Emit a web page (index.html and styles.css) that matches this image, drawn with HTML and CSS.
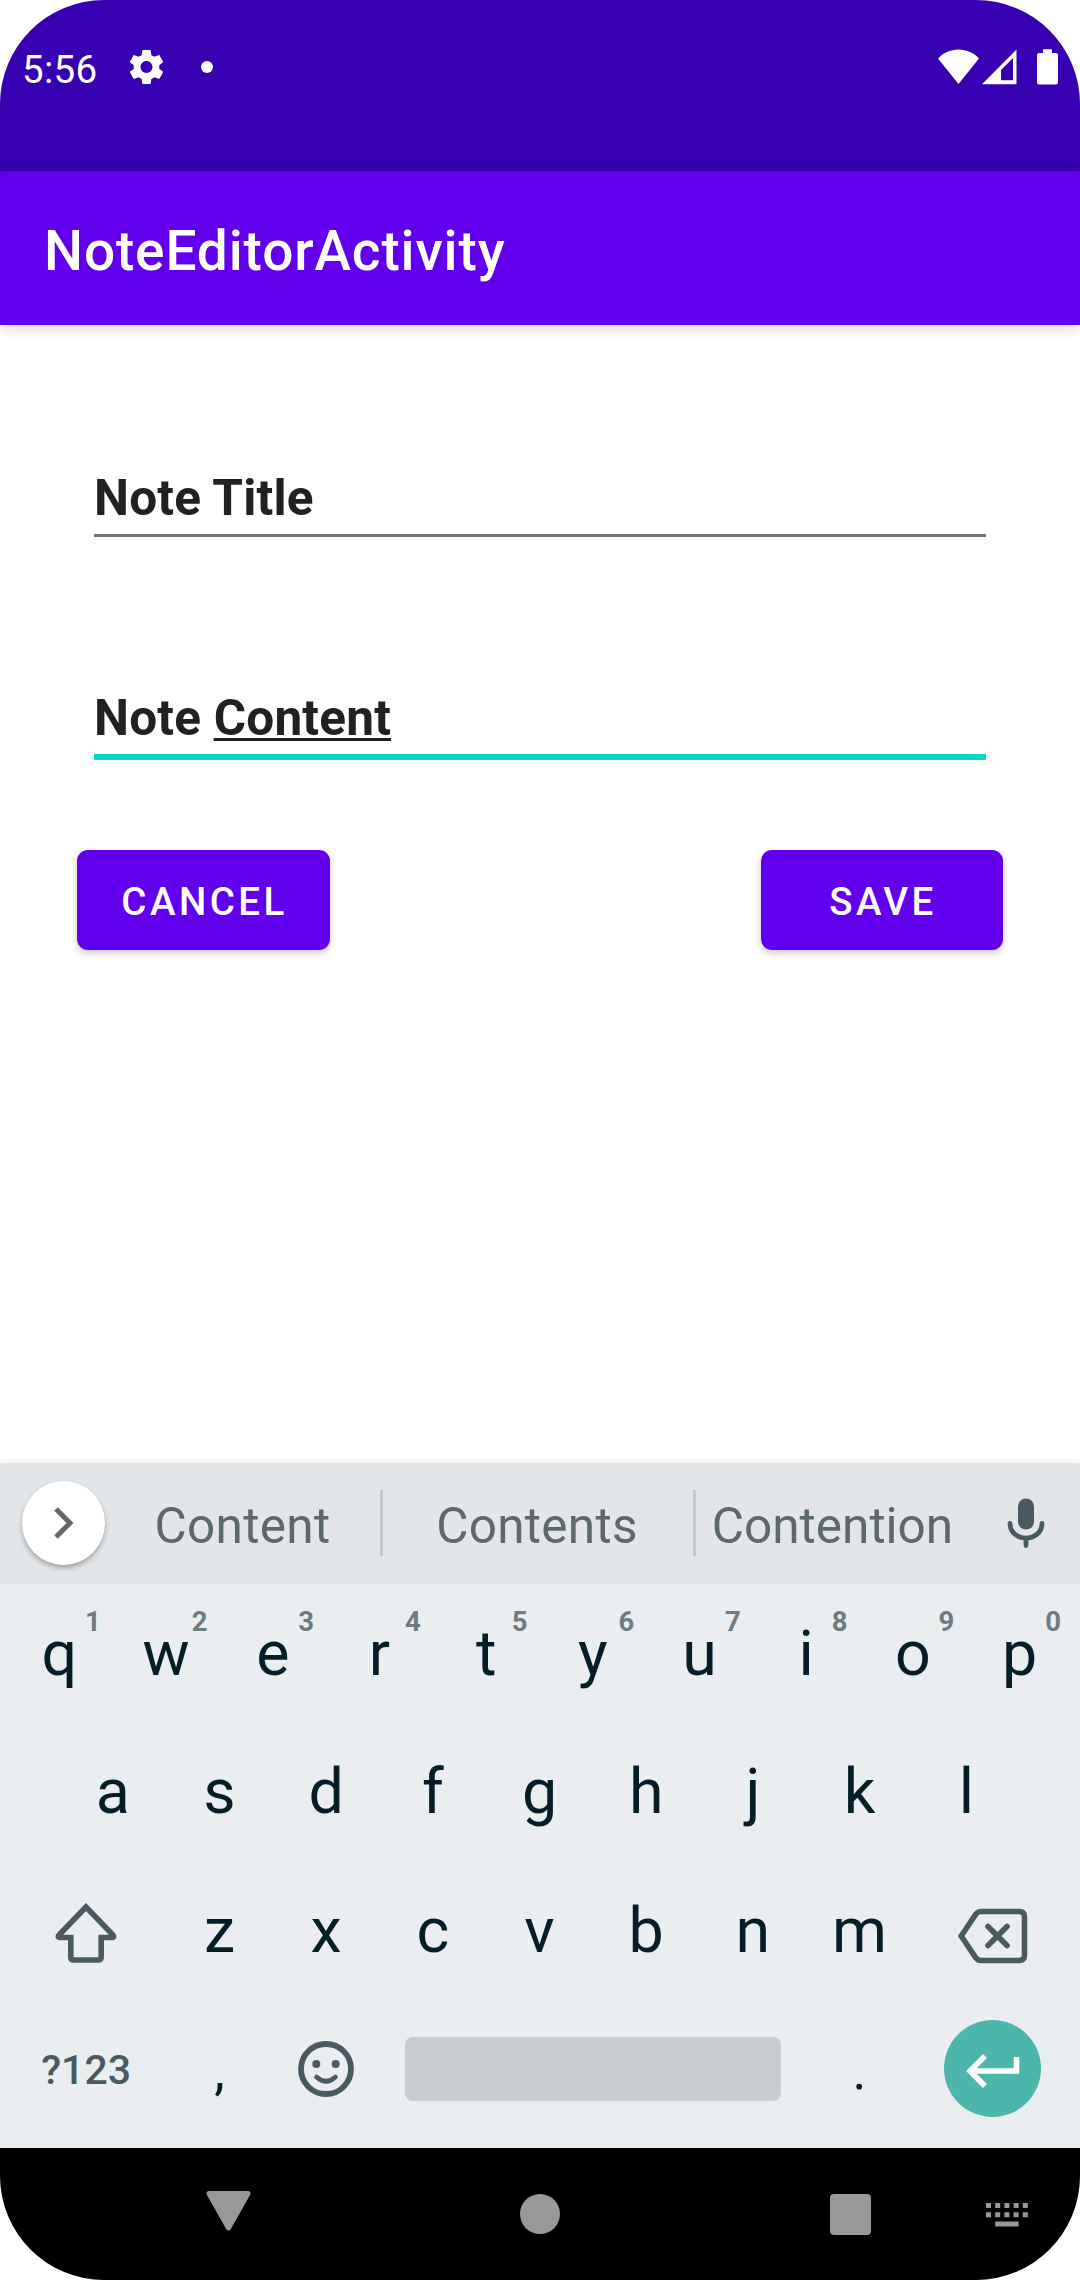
FILE: index.html
```html
<!DOCTYPE html>
<html lang="en">
<head>
<meta charset="utf-8">
<title>NoteEditorActivity</title>
<link rel="stylesheet" href="styles.css">
</head>
<body>
<div class="screen">
  <header class="status-bar">
    <span class="clock">5:56</span>
    <svg class="gear" viewBox="0 0 24 24"><path fill="#fff" fill-rule="evenodd" d="M19.43 12.98c.04-.32.07-.64.07-.98s-.03-.66-.07-.98l2.11-1.65c.19-.15.24-.42.12-.64l-2-3.46c-.12-.22-.39-.3-.61-.22l-2.49 1c-.52-.4-1.08-.73-1.69-.98l-.38-2.65C14.46 2.180 14.250 2 14 2h-4c-.25 0-.46.18-.49.42l-.38 2.650c-.61.25-1.170.59-1.690.98l-2.490-1c-.23-.09-.49 0-.61.22l-2 3.460c-.13.22-.07.49.12.640l2.110 1.650c-.04.32-.07.650-.07.980s.03.660.070.980l-2.110 1.650c-.19.150-.24.420-.12.640l2 3.460c.12.220.390.300.610.220l2.490-1c.52.400 1.080.730 1.690.980l.38 2.650c.03.240.240.420.490.420h4c.25 0 .46-.18.490-.42l.38-2.650c.61-.25 1.170-.59 1.690-.98l2.490 1c.23.090.490 0 .610-.22l2-3.460c.12-.22.070-.49-.12-.64l-2.110-1.650zM12 15.500c-1.930 0-3.500-1.570-3.500-3.500s1.570-3.500 3.500-3.500 3.500 1.570 3.500 3.500-1.570 3.500-3.500 3.500z"/></svg>
    <span class="dot"></span>
    <div class="indicators">
      <svg width="41" height="36" viewBox="0 0 41 36"><path fill="#fff" d="M0 9.500C5 4 12 .5 20.500.5S36 4 41 9.500L20.500 35z"/></svg>
      <svg class="signal" width="35" height="36" viewBox="0 0 35 36"><path fill="#fff" fill-rule="evenodd" d="M0 35.200 34.500.5v34.700zM19 21v10.200h12V9z"/></svg>
      <svg class="battery" width="21" height="36" viewBox="0 0 21 36"><path fill="#fff" d="M6 .3h9V4h4a2 2 0 0 1 2 2v27.500a2 2 0 0 1-2 2H2a2 2 0 0 1-2-2V6a2 2 0 0 1 2-2h4z"/></svg>
    </div>
  </header>

  <div class="app-bar"><h1>NoteEditorActivity</h1></div>

  <main class="editor">
    <div class="field title">Note Title</div>
    <div class="field content">Note <u>Content</u></div>
    <div class="actions">
      <button class="btn">CANCEL</button>
      <button class="btn">SAVE</button>
    </div>
  </main>

  <section class="keyboard">
    <div class="suggestions">
      <span class="expand"><svg width="22" height="34" viewBox="0 0 22 34"><path d="M3 3l14 14L3 31" fill="none" stroke="#666" stroke-width="5"/></svg></span>
      <span class="word first">Content</span>
      <span class="word second">Contents</span>
      <span class="word third">Contention</span>
      <svg class="mic" width="38" height="50" viewBox="0 0 38 50"><rect x="11" y=".5" width="16" height="31" rx="8" fill="#4a5a61"/><path d="M3 25.500C3.500 45 34.500 45 35 25.500M19 40v7.500" fill="none" stroke="#4a5a61" stroke-width="4.800" stroke-linecap="round"/></svg>
    </div>
    <div class="keys">
      <div class="row">
        <span class="key">q<sup>1</sup></span><span class="key">w<sup>2</sup></span><span class="key">e<sup>3</sup></span><span class="key">r<sup>4</sup></span><span class="key">t<sup>5</sup></span><span class="key">y<sup>6</sup></span><span class="key">u<sup>7</sup></span><span class="key">i<sup>8</sup></span><span class="key">o<sup>9</sup></span><span class="key">p<sup>0</sup></span>
      </div>
      <div class="row">
        <span class="key">a</span><span class="key">s</span><span class="key">d</span><span class="key">f</span><span class="key">g</span><span class="key">h</span><span class="key">j</span><span class="key">k</span><span class="key">l</span>
      </div>
      <div class="row">
        <span class="key wide"><svg class="shift" width="62" height="60" viewBox="0 0 62 60"><path d="M31 4 4.500 31.500Q1.500 34.500 6 34.500H15.800V54Q15.800 57 18.800 57H43.200Q46.200 57 46.200 54V34.500H56Q60.500 34.500 57.500 31.500Z" fill="none" stroke="#4a5a61" stroke-width="5.600"/></svg></span>
        <span class="key">z</span><span class="key">x</span><span class="key">c</span><span class="key">v</span><span class="key">b</span><span class="key">n</span><span class="key">m</span>
        <span class="key wide"><svg class="delete" width="70" height="56" viewBox="0 0 70 56"><g fill="none" stroke="#4a5a61" stroke-width="5.600"><path d="M3.200 28 18 6Q20 3.500 23 3.500H61Q66.500 3.500 66.500 9V47Q66.500 52.500 61 52.500H23Q20 52.500 18 50Z"/><path d="M30 18.500 49 37.500M49 18.500 30 37.500" stroke-linecap="round"/></g></svg></span>
      </div>
      <div class="row">
        <span class="key wide symbols">?123</span>
        <span class="key punct">,</span>
        <span class="key"><svg width="56" height="56" viewBox="0 0 56 56"><circle cx="28" cy="28" r="25" fill="none" stroke="#4a5a61" stroke-width="5.800"/><circle cx="18.300" cy="23" r="4" fill="#4a5a61"/><circle cx="37.700" cy="23" r="4" fill="#4a5a61"/><path d="M18.500 36Q28 44.500 37.500 36" fill="none" stroke="#4a5a61" stroke-width="4.600" stroke-linecap="round"/></svg></span>
        <span class="key space"></span>
        <span class="key punct">.</span>
        <span class="key wide"><span class="enter"><svg width="54" height="34" viewBox="0 0 54 34"><path d="M19 2 4 17 19 32M4.500 17H50.500V3" fill="none" stroke="#fff" stroke-width="5.600"/></svg></span></span>
      </div>
    </div>
  </section>

  <nav class="nav-bar">
    <svg class="back" width="45" height="40" viewBox="0 0 45 40"><path d="M3 2.500H42L22.500 37Z" fill="#999" stroke="#999" stroke-width="5" stroke-linejoin="round"/></svg>
    <span class="home"></span>
    <span class="recents"></span>
    <svg class="ime" width="42" height="24" viewBox="0 0 42 24"><path fill="#999" d="M0 0h5v5H0zM9.200 0h5v5h-5zM18.400 0h5v5h-5zM27.600 0h5v5h-5zM36.800 0h5v5h-5zM0 9.300h5v5H0zM9.200 9.300h5v5h-5zM18.400 9.300h5v5h-5zM27.600 9.300h5v5h-5zM36.800 9.300h5v5h-5zM9.200 18.500h23.400v5H9.200z"/></svg>
  </nav>
</div>
</body>
</html>
```
FILE: styles.css
```css
* { box-sizing: border-box; }
body {
  margin: 0;
  background: #fff;
  font-family: Roboto, "Noto Sans", sans-serif;
}
svg { display: block; flex: none; }

.screen {
  width: 1080px;
  height: 2280px;
  display: flex;
  flex-direction: column;
  overflow: hidden;
  border-radius: 104px;
  background: #fff;
}

.status-bar {
  height: 171px;
  padding: 49px 22px 0 22px;
  display: flex;
  align-items: flex-start;
  background: #3700b3;
  color: #fff;
}
.clock {
  width: 104px;
  margin-top: 1px;
  font-size: 38.5px;
  line-height: 40px;
  letter-spacing: .3px;
}
.gear { width: 41px; height: 42px; margin-top: -3px; }
.dot {
  width: 12px;
  height: 12px;
  margin: 12px 0 0 34px;
  border-radius: 50%;
  background: #fff;
}
.indicators { display: flex; margin-left: auto; }
.signal { margin-left: 3px; }
.battery { margin-left: 20px; }

.app-bar {
  height: 154px;
  padding: 6px 44px 0;
  display: flex;
  align-items: center;
  position: relative;
  background: #6200ee;
  box-shadow: 0 3px 12px rgba(0, 0, 0, .16);
}
.app-bar h1 {
  margin: 0;
  color: #fff;
  font-size: 55px;
  font-weight: 500;
  letter-spacing: .86px;
}

.editor { height: 1138px; padding: 143px 77px 0; }
.field {
  margin: 0 17px;
  font-size: 49.5px;
  font-weight: 700;
  line-height: 60px;
  letter-spacing: .2px;
  color: #212121;
}
.field.title { height: 69px; border-bottom: 3px solid #757575; }
.field.content {
  height: 74px;
  margin-top: 149px;
  padding-top: 2px;
  border-bottom: 6px solid #03dac5;
}
.field u {
  text-decoration-thickness: 3px;
  text-underline-offset: 3px;
  text-decoration-skip-ink: none;
}
.actions { display: flex; justify-content: space-between; margin-top: 90px; }
.btn {
  width: 242px;
  height: 100px;
  padding: 3px 0 0 2px;
  border: 0;
  border-radius: 11px;
  background: #6200ee;
  box-shadow: 0 3px 7px rgba(0, 0, 0, .22);
  color: #fff;
  font: 500 38.5px Roboto, sans-serif;
  letter-spacing: .0893em;
}
.btn:first-child { width: 253px; }

.keyboard {
  height: 685px;
  background: #ebeef1;
  box-shadow: 0 -1px 6px rgba(0, 0, 0, .08);
}
.suggestions {
  height: 121px;
  padding: 0 0 2px 22px;
  display: flex;
  align-items: center;
  background: #e3e6e9;
}
.expand {
  width: 83px;
  height: 84px;
  display: flex;
  align-items: center;
  justify-content: center;
  border-radius: 50%;
  background: #fff;
  box-shadow: 0 3px 5px rgba(0, 0, 0, .3);
}
.word {
  height: 66px;
  padding-top: 6px;
  text-align: center;
  font-size: 49.5px;
  line-height: 61px;
  color: #5b686e;
}
.word.first { width: 278px; border-right: 3px solid #c3c8cb; letter-spacing: .3px; }
.word.second { width: 313px; padding-right: 2px; border-right: 3px solid #c3c8cb; letter-spacing: .3px; }
.word.third { width: 273px; }
.mic { margin-left: 38px; }

.keys { padding: 0 7px 10px 6px; }
.row { height: 138.5px; display: flex; justify-content: center; }
.key {
  width: 106.7px;
  display: flex;
  align-items: center;
  justify-content: center;
  position: relative;
  font-size: 62.7px;
  color: #051d27;
}
.key sup {
  position: absolute;
  top: 22px;
  right: 12px;
  font-size: 27.5px;
  font-weight: 700;
  line-height: 32px;
  color: #6e7b81;
}
.key.wide { width: 160px; }
.key.symbols {
  padding-top: 3px;
  font-size: 41px;
  font-weight: 500;
  color: #4a5a61;
}
.key.punct { padding-top: 5px; font-size: 53px; }
.shift { margin-top: 6px; }
.delete { margin-top: 12px; }
.key.space {
  width: 376px;
  height: 64px;
  margin: 37px 25.4px 0;
  border-radius: 8px;
  background: #c9cdd0;
}
.enter {
  width: 97px;
  height: 97px;
  display: flex;
  align-items: center;
  justify-content: center;
  border-radius: 50%;
  background: #4db6ac;
}
.enter svg { margin-top: 4px; }

.nav-bar {
  height: 132px;
  padding: 43px 0 0 206px;
  display: flex;
  align-items: flex-start;
  background: #000;
}
.home {
  width: 40px;
  height: 40px;
  margin: 3px 0 0 269px;
  border-radius: 50%;
  background: #999;
}
.recents {
  width: 41px;
  height: 41px;
  margin: 3px 0 0 270px;
  border-radius: 4px;
  background: #999;
}
.ime { margin: 12px 0 0 115px; }
```
